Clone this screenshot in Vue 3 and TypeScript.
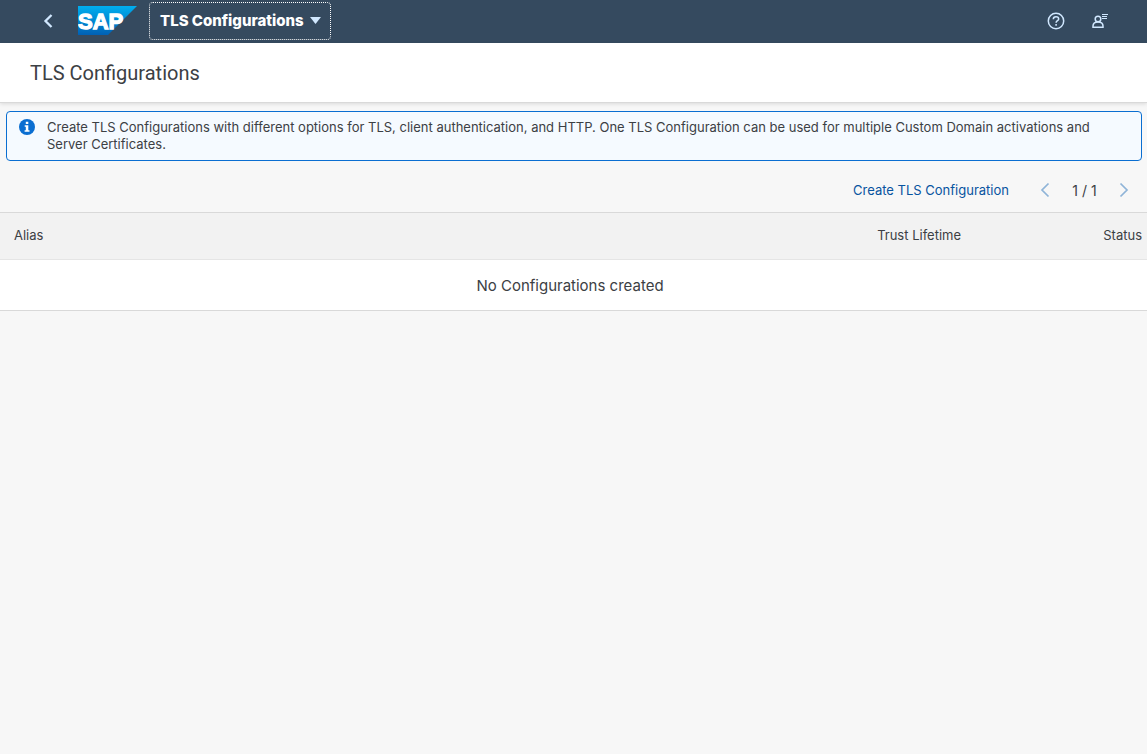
<script setup lang="ts">
import { ref } from 'vue'

interface Configuration {
  alias: string
  trustLifetime: string
  status: string
}

const title = 'TLS Configurations'
const configurations = ref<Configuration[]>([])
const page = ref(1)
const pageCount = ref(1)
</script>

<template>
  <div class="app">
    <header class="shell">
      <button class="icon-button back" type="button" aria-label="Back">
        <svg width="12" height="16" viewBox="0 0 12 16"><path d="M9.500 2 3.500 8l6 6" /></svg>
      </button>
      <a class="logo" href="#" aria-label="Home">
        <svg width="60" height="29" viewBox="0 0 60 29">
          <defs>
            <linearGradient id="logo-fill" x1="0" y1="0" x2="0" y2="1">
              <stop offset="0" stop-color="#00aeef" />
              <stop offset="0.5" stop-color="#0089d3" />
              <stop offset="1" stop-color="#0060b4" />
            </linearGradient>
          </defs>
          <path d="M0 0h59L30 29H0z" fill="url(#logo-fill)" />
          <text x="0" y="23">SAP</text>
        </svg>
      </a>
      <button class="app-menu" type="button" aria-haspopup="true">
        <span>{{ title }}</span>
        <svg width="11" height="7" viewBox="0 0 11 7"><path d="M0 0h11L5.500 7z" /></svg>
      </button>
      <div class="shell-actions">
        <button class="icon-button" type="button" aria-label="Help">
          <svg width="18" height="18" viewBox="0 0 18 18">
            <circle cx="9" cy="9" r="7.700" />
            <path class="mark" d="M6.300 7.200C6.300 5.500 7.400 4.700 9 4.700s2.700.9 2.700 2.200C11.700 8.700 9.100 8.700 9.100 10.700M9.100 12v1.800" />
          </svg>
        </button>
        <button class="icon-button" type="button" aria-label="User menu">
          <svg width="18" height="18" viewBox="0 0 18 18">
            <circle cx="7" cy="7" r="2.800" />
            <path d="M2 15.300v-1.200c0-2.500 2-4.100 5-4.100s5 1.600 5 4.100v1.200z" />
            <path class="lines" d="M11 2.500h6M11 4.500h5M11 6.500h5" />
          </svg>
        </button>
      </div>
    </header>

    <div class="page-header">
      <h1>{{ title }}</h1>
    </div>

    <main>
      <div class="message" role="note">
        <svg width="16" height="16" viewBox="0 0 16 16">
          <circle cx="8" cy="8" r="8" />
          <path d="M6.800 2.800h2.500v2.100H6.800zM5.700 6.300h3.600v5h1.200v1.500H5.600v-1.500h1.200V7.700H5.700z" />
        </svg>
        <p>Create TLS Configurations with different options for TLS, client authentication, and HTTP. One TLS Configuration can be used for multiple Custom Domain activations and Server Certificates.</p>
      </div>

      <div class="toolbar">
        <button class="create" type="button">Create TLS Configuration</button>
        <button class="pager" type="button" aria-label="Previous page" disabled>
          <svg width="10" height="16" viewBox="0 0 10 16"><path d="M8.500 1.500 2 8l6.500 6.500" /></svg>
        </button>
        <span class="page-count">{{ page }} / {{ pageCount }}</span>
        <button class="pager" type="button" aria-label="Next page" disabled>
          <svg width="10" height="16" viewBox="0 0 10 16"><path d="M1.500 1.500 8 8l-6.500 6.500" /></svg>
        </button>
      </div>

      <table>
        <thead>
          <tr>
            <th class="alias" scope="col">Alias</th>
            <th class="lifetime" scope="col">Trust Lifetime</th>
            <th class="status" scope="col">Status</th>
          </tr>
        </thead>
        <tbody>
          <tr v-for="item in configurations" :key="item.alias">
            <td class="alias">{{ item.alias }}</td>
            <td class="lifetime">{{ item.trustLifetime }}</td>
            <td class="status">{{ item.status }}</td>
          </tr>
          <tr v-if="configurations.length === 0">
            <td class="empty" colspan="3">No Configurations created</td>
          </tr>
        </tbody>
      </table>
    </main>
  </div>
</template>

<style>
body {
  background: #f7f7f7;
}
</style>

<style scoped>
.app {
  min-height: 100vh;
  background: #f7f7f7;
  color: #3c4044;
  font-family: Inter, "Liberation Sans", sans-serif;
  font-size: 13px;
}

button {
  padding: 0;
  border: 0;
  background: none;
  color: inherit;
  font: inherit;
}

svg {
  display: block;
  fill: none;
}

.shell {
  display: flex;
  align-items: center;
  height: 41px;
  padding: 0 29px 2px 30px;
  background: #354a5f;
}

.icon-button {
  display: flex;
  align-items: center;
  justify-content: center;
  width: 36px;
  height: 36px;
  stroke: #d1e8ff;
  stroke-width: 1.5;
}

.back {
  stroke-width: 2.3;
}

.logo {
  margin-left: 12px;
}

.logo text {
  fill: #fff;
  stroke: #fff;
  stroke-width: 1.3;
  font-family: "Liberation Sans", sans-serif;
  font-size: 22px;
  font-weight: 700;
}

.app-menu {
  display: flex;
  align-items: center;
  gap: 6px;
  height: 38px;
  margin-left: 11px;
  padding: 0 9px 0 10px;
  border: 1px dotted #fff;
  border-radius: 4px;
  color: #fff;
  font-size: 15px;
  font-weight: 800;
}

.app-menu path {
  fill: #d1e8ff;
}

.shell-actions {
  display: flex;
  gap: 8px;
  margin-left: auto;
}

.shell-actions .lines {
  stroke-width: 1;
}

.page-header {
  display: flex;
  align-items: center;
  height: 59px;
  padding: 0 30px;
  background: #fff;
  box-shadow: 0 1px 0 #d9d9d9, 0 2px 4px rgba(0, 0, 0, 0.12);
}

h1 {
  margin: 0;
  font-family: Roboto, "Liberation Sans", sans-serif;
  font-size: 20px;
  font-weight: 400;
}

.message {
  display: flex;
  gap: 12px;
  margin: 9px 5px 0 6px;
  padding: 7px 12px;
  border: 1px solid #0a6ed1;
  border-radius: 4px;
  background: #f5faff;
}

.message svg {
  flex: none;
}

.message circle {
  fill: #0a6ed1;
}

.message path {
  fill: #fff;
}

.message p {
  margin: 0;
  line-height: 17px;
}

.toolbar {
  display: flex;
  align-items: center;
  justify-content: flex-end;
  height: 51px;
  padding: 8px 5px 1px 0;
  box-sizing: border-box;
}

.create {
  margin-right: 18px;
  color: #0854a0;
}

.pager {
  display: flex;
  align-items: center;
  justify-content: center;
  width: 36px;
  height: 36px;
  stroke: #8fb4d8;
  stroke-width: 1.7;
}

.page-count {
  min-width: 27px;
  margin: 0 8px;
  font-size: 14px;
  text-align: center;
}

table {
  width: 100%;
  border-collapse: collapse;
  table-layout: fixed;
}

th {
  height: 44px;
  padding: 0 5px 2px 14px;
  border-top: 1px solid #d9d9d9;
  border-bottom: 1px solid #e5e5e5;
  background: #f2f2f2;
  font-weight: 400;
}

td {
  height: 50px;
  padding: 0 5px 0 14px;
  border-bottom: 1px solid #d9d9d9;
  background: #fff;
}

.alias {
  text-align: left;
}

.lifetime {
  width: 30%;
  text-align: center;
}

.status {
  width: 4%;
  padding-left: 0;
  text-align: right;
}

.empty {
  padding: 0 7px 0 0;
  font-size: 15px;
  text-align: center;
}
</style>
